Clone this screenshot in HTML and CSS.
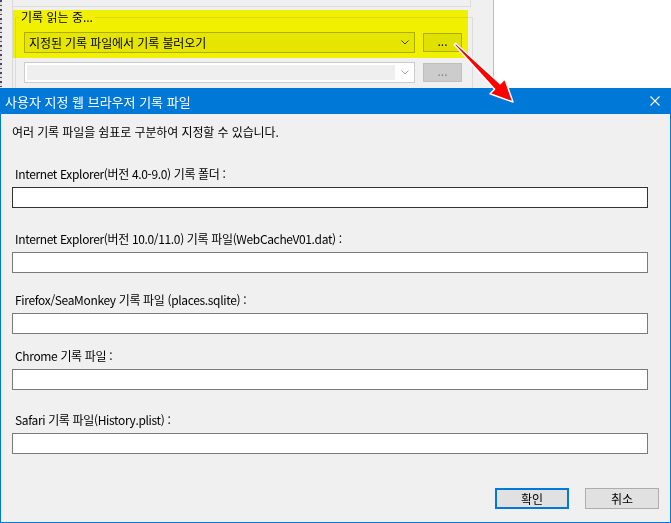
FILE: index.html
```html
<!DOCTYPE html>
<html lang="ko">
<head>
    <meta charset="UTF-8">
    <title>사용자 지정 웹 브라우저 기록 파일</title>
    <link rel="stylesheet" href="styles.css">
</head>
<body>
    <!-- окно позади диалога -->
    <div class="desk">
        <div class="edge"></div>
        <div class="gutter"></div>
        <div class="panel">
            <div class="prev-box"></div>
            <div class="group">
                <div class="group-title">기록 읽는 중...</div>
                <div class="row">
                    <div class="combo">
                        <span class="combo-text">지정된 기록 파일에서 기록 불러오기</span>
                        <svg class="chevron" width="8" height="5" viewBox="0 0 8 5"><path d="M0.5 0.5L4 4L7.5 0.5" fill="none" stroke="#3c3c3c"/></svg>
                    </div>
                    <button class="dots">...</button>
                </div>
                <div class="row row-second">
                    <div class="combo combo-off">
                        <span class="combo-field"></span>
                        <svg class="chevron" width="8" height="5" viewBox="0 0 8 5"><path d="M0.5 0.5L4 4L7.5 0.5" fill="none" stroke="#a8a8a8"/></svg>
                    </div>
                    <button class="dots dots-off">...</button>
                </div>
            </div>
            <div class="highlight"></div>
        </div>
        <div class="blank"></div>
    </div>

    <!-- диалог -->
    <div class="dialog">
        <div class="titlebar">
            <span class="title">사용자 지정 웹 브라우저 기록 파일</span>
            <svg class="close" width="10" height="10" viewBox="0 0 10 10"><path d="M0.5 0.5L9.5 9.5M9.5 0.5L0.5 9.5" stroke="#fff" stroke-width="1.1"/></svg>
        </div>
        <div class="dialog-body">
            <p class="hint">여러 기록 파일을 쉼표로 구분하여 지정할 수 있습니다.</p>
            <div class="field field-ie">
                <label class="field-label">Internet Explorer(버전 4.0-9.0) 기록 폴더 :</label>
                <input type="text" class="path path-focus">
            </div>
            <div class="field field-ie10">
                <label class="field-label">Internet Explorer(버전 10.0/11.0) 기록 파일(WebCacheV01.dat) :</label>
                <input type="text" class="path">
            </div>
            <div class="field field-ff">
                <label class="field-label">Firefox/SeaMonkey 기록 파일 (places.sqlite) :</label>
                <input type="text" class="path">
            </div>
            <div class="field field-chrome">
                <label class="field-label">Chrome 기록 파일 :</label>
                <input type="text" class="path">
            </div>
            <div class="field field-safari">
                <label class="field-label">Safari 기록 파일(History.plist) :</label>
                <input type="text" class="path">
            </div>
            <div class="actions">
                <button class="btn btn-default">확인</button>
                <button class="btn">취소</button>
            </div>
        </div>
    </div>

    <!-- красная стрелка поверх -->
    <svg class="arrow" width="80" height="75" viewBox="445 35 80 75">
        <polygon points="455.7,43.3 500.2,83.6 504.8,79 513,102 490,93.8 494.6,89.2 454.3,44.7" fill="#ff0000" stroke="#fff" stroke-width="1.5" stroke-linejoin="round"/>
    </svg>
</body>
</html>
```

FILE: styles.css
```css
/* общие */
body {
    margin: 0;
    padding: 0;
    position: relative;
    width: 671px;
    height: 523px;
    overflow: hidden;
    background-color: #f0f0f0;
    font-family: "Noto Sans CJK KR", "Noto Sans", sans-serif;
    font-size: 12px;
    color: #000;
}

/* окно позади */
.desk {
    display: flex;
    height: 88px;
    overflow: hidden;
}
.edge {
    width: 2px;
    background: repeating-linear-gradient(to bottom, #4e4466 0 2px, #dcdcdc 2px 5px, #5b5070 5px 6px, #e6e6e6 6px 9px);
}
.gutter {
    width: 10px;
    border-right: 1px solid #d9d9d9;
    background-color: #f0f0f0;
}
.panel {
    position: relative;
    width: 480px;
    border-right: 1px solid #bdbdbd;
    background-color: #f0f0f0;
}
.blank {
    flex: 1;
    background-color: #fff;
}
.prev-box {
    width: 457px;
    height: 6px;
    border-bottom: 1px solid #dcdcdc;
    border-right: 1px solid #dcdcdc;
}
.group {
    margin: 10px 0 0 2px;
    width: 448px;
    height: 100px;
    padding-left: 8px;
    border: 1px solid #dcdcdc;
}
.group-title {
    width: fit-content;
    margin: -9px 0 0 -5px;
    padding: 0 2px;
    line-height: 16px;
    background-color: #f0f0f0;
}
.row {
    display: flex;
    align-items: center;
    gap: 8px;
    margin-top: 7px;
}
.row-second {
    margin-top: 9px;
}
.combo {
    display: flex;
    align-items: center;
    box-sizing: border-box;
    width: 391px;
    height: 21px;
    padding-left: 4px;
    border: 1px solid #adadad;
    background-color: #e5e5e5;
}
.combo-text {
    line-height: 16px;
    letter-spacing: -0.1px;
}
.chevron {
    margin-left: auto;
    margin-right: 5px;
}
.combo-off {
    padding: 2px 0 2px 2px;
    border-color: #cccccc;
    background-color: #fff;
}
.combo-field {
    width: 368px;
    height: 100%;
    background-color: #efefef;
}
.dots {
    box-sizing: border-box;
    width: 39px;
    height: 19px;
    padding: 0 0 4px;
    border: 1px solid #adadad;
    background-color: #e1e1e1;
    font-family: inherit;
    font-size: 12px;
    line-height: 12px;
    color: #000;
}
.dots-off {
    border-color: #bfbfbf;
    background-color: #cccccc;
    color: #838383;
}
/* маркер поверх группы */
.highlight {
    position: absolute;
    left: 0;
    top: 10px;
    width: 455px;
    height: 48px;
    background-color: #ffff00;
    mix-blend-mode: multiply;
}

/* диалог */
.dialog {
    box-sizing: border-box;
    height: 435px;
    border: 1px solid #0078d7;
    border-top: none;
    background-color: #f0f0f0;
}
.titlebar {
    display: flex;
    align-items: center;
    justify-content: space-between;
    height: 26px;
    margin: 0 -1px;
    padding-left: 5px;
    background-color: #0078d7;
    color: #fff;
}
.title {
    font-size: 13px;
}
.close {
    margin-right: 11px;
}
.dialog-body {
    padding: 0 11px;
}
.hint {
    margin: 10px 0 0;
    line-height: 16px;
    letter-spacing: -0.1px;
}
.field-label {
    display: block;
    padding-left: 3px;
    line-height: 16px;
    margin-bottom: 5px;
    letter-spacing: -0.35px;
}
.path {
    display: block;
    box-sizing: border-box;
    width: 636px;
    height: 21px;
    margin: 0;
    padding: 0 3px;
    border: 1px solid #7a7a7a;
    background-color: #fff;
    outline: none;
}
.path-focus {
    border-color: #333;
}
.field-ie { margin-top: 26px; }
.field-ie10 { margin-top: 23px; }
.field-ff { margin-top: 19px; }
.field-chrome { margin-top: 14px; }
.field-safari { margin-top: 22px; }

.actions {
    display: flex;
    justify-content: flex-end;
    gap: 16px;
    margin-top: 34px;
}
.btn {
    box-sizing: border-box;
    width: 74px;
    height: 21px;
    padding: 0;
    border: 1px solid #adadad;
    background-color: #e1e1e1;
    font-family: inherit;
    font-size: 12px;
    color: #000;
}
.btn-default {
    border: 2px solid #0078d7;
}

/* стрелка */
.arrow {
    position: absolute;
    left: 445px;
    top: 35px;
    pointer-events: none;
}
```
